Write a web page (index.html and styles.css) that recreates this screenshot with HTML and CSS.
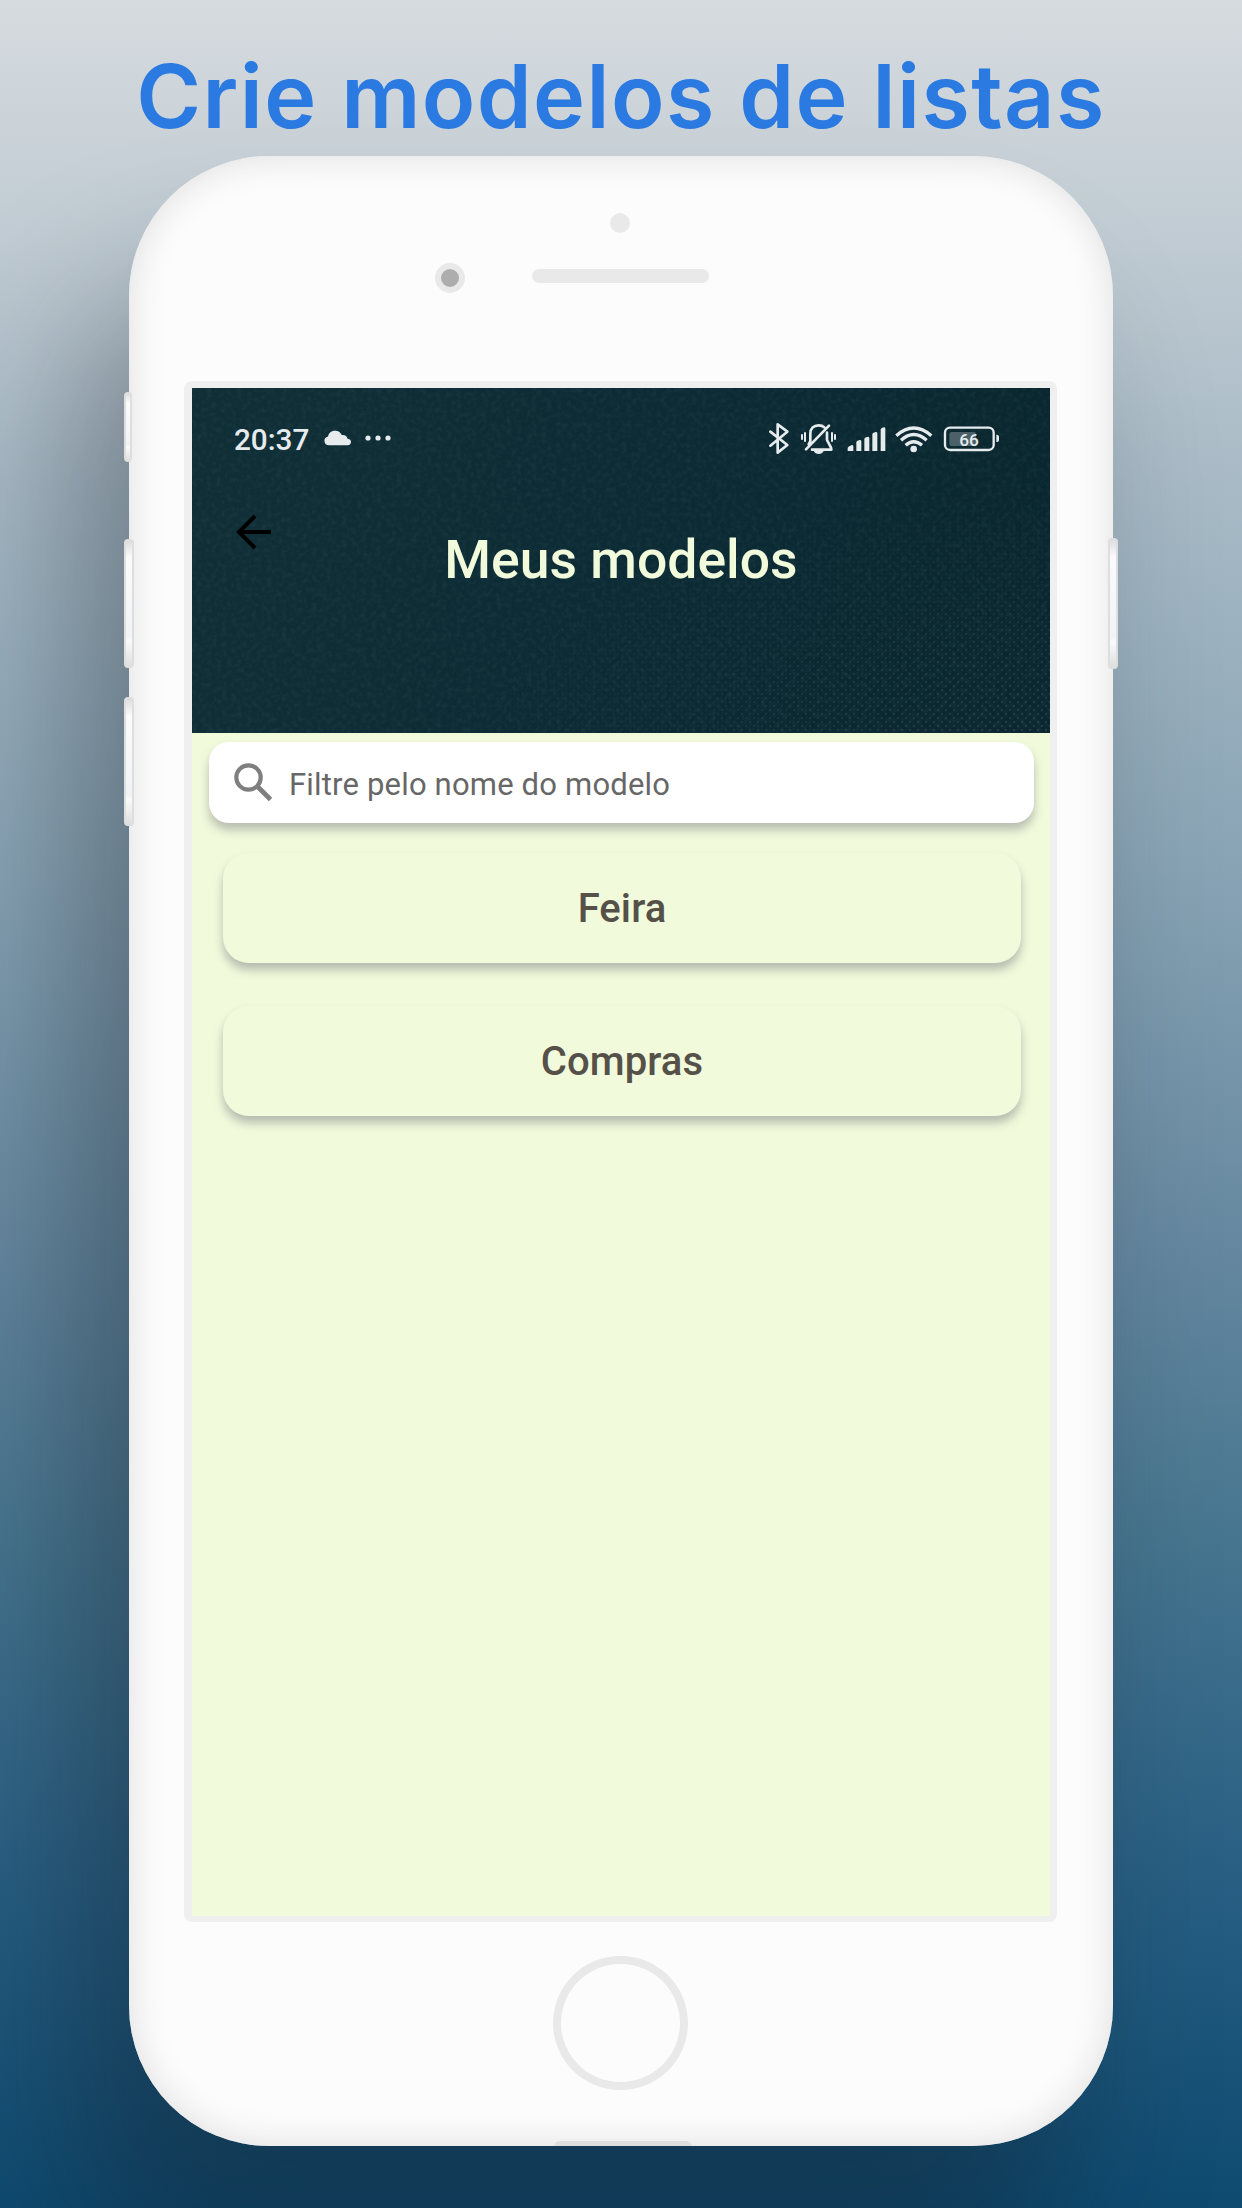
FILE: index.html
```html
<!DOCTYPE html>
<html lang="pt-BR">
<head>
<meta charset="utf-8">
<title>Crie modelos de listas</title>
<link rel="stylesheet" href="styles.css">
</head>
<body>
<main class="promo">
  <h1 class="promo-title">Crie modelos de listas</h1>
  <div class="phone">
    <span class="side-button mute"></span>
    <span class="side-button volume-up"></span>
    <span class="side-button volume-down"></span>
    <span class="side-button power"></span>
    <div class="phone-body">
      <div class="phone-top">
        <span class="sensor"></span>
        <span class="camera"></span>
        <span class="speaker"></span>
      </div>
      <div class="screen">
        <header class="app-header">
          <svg class="weave" width="858" height="345" aria-hidden="true">
            <defs>
              <filter id="grain" x="0" y="0" width="100%" height="100%">
                <feTurbulence type="fractalNoise" baseFrequency="0.2" numOctaves="2" seed="4"/>
                <feColorMatrix values="0 0 0 0 .3  0 0 0 0 .5  0 0 0 0 .52  .9 0 0 0 -.36"/>
              </filter>
              <pattern id="dots" width="8" height="8" patternUnits="userSpaceOnUse">
                <circle cx="2" cy="2" r="1.2" fill="#46636a"/><circle cx="6" cy="6" r="1.2" fill="#46636a"/>
              </pattern>
              <radialGradient id="fade" cx="1" cy="1" r=".75">
                <stop offset="0" stop-color="#fff" stop-opacity=".4"/><stop offset="1" stop-color="#fff" stop-opacity="0"/>
              </radialGradient>
              <mask id="corner"><rect width="858" height="345" fill="url(#fade)"/></mask>
            </defs>
            <rect width="858" height="345" filter="url(#grain)" opacity=".16"/>
            <rect width="858" height="345" fill="url(#dots)" mask="url(#corner)"/>
          </svg>
          <div class="status-bar">
            <span class="clock">20:37</span>
            <svg class="cloud" width="28" height="16" viewBox="0 0 28 16"><path d="M5 15.3a4.5 4.5 0 0 1-1-8.9C5 2.5 8 .8 11.200.8c3 0 5.300 1.500 6.600 4.200 3.200-.5 5.200 1.200 5.800 3.800 2.300.3 3.400 1.500 3.400 3.200 0 2-1.500 3.300-3.500 3.300z"/></svg>
            <svg class="more" width="26" height="6" viewBox="0 0 26 6"><circle cx="3" cy="3" r="2.600"/><circle cx="13" cy="3" r="2.600"/><circle cx="23" cy="3" r="2.600"/></svg>
            <svg class="indicators" width="234" height="37" viewBox="80 60 702 111">
              <g fill="none" stroke="#e6ebed" stroke-width="8" stroke-linecap="round" stroke-linejoin="round">
                <path d="M90 95l51 40-29 23V73l29 22-51 42"/>
                <path d="M205 133l5-10v-22c0-16 10-25 25-25 7 0 13 2 17 6M260 98v22l12 23 1 6h-58M197 148l69-71"/>
                <path d="M185 105v12M194 99v24M275 99v24M284 105v12" stroke-width="6"/>
                <rect x="614" y="83" width="146" height="67" rx="15" stroke-width="7"/>
              </g>
              <g fill="none" stroke="#e6ebed" stroke-width="10">
                <path d="M468 107q52-46 105 0M482 121q38-35 77 0M496 136q24-22 49 0"/>
              </g>
              <g fill="#e6ebed">
                <path d="M220 153h30c-3 6-8 9-15 9s-12-3-15-9z"/>
                <path d="M322 153v-9q1-4 13-9q4 0 4 4v14zM348 153v-27q1-4 11-6q4 0 4 4v29zM372 153v-37q1-4 11-6q4 0 4 4v39zM396 153v-51q1-4 11-6q4 0 4 4v53zM421 153V88q1-4 10-6q4 0 4 4v67z"/>
                <circle cx="520" cy="147" r="10"/>
                <path d="M768 104h2q6 1 6 6v10q0 6-6 6h-2z"/>
              </g>
              <rect x="627" y="96" width="80" height="42" rx="7" fill="#4b6067"/>
              <text x="686" y="137" text-anchor="middle" class="battery-level">66</text>
            </svg>
          </div>
          <svg class="back" width="36" height="36" viewBox="0 0 36 36"><path d="M35 18H4M19 2L3 18l16 16" fill="none" stroke="#000" stroke-width="4"/></svg>
          <h2 class="app-title">Meus modelos</h2>
        </header>
        <section class="content">
          <div class="search">
            <svg width="40" height="40" viewBox="0 0 40 40"><g fill="none" stroke="#7f7f7f"><circle cx="15.500" cy="14.500" r="12.200" stroke-width="4.200"/><path d="M24 23L37.500 36.500" stroke-width="4.800"/></g></svg>
            <span>Filtre pelo nome do modelo</span>
          </div>
          <div class="model">Feira</div>
          <div class="model">Compras</div>
        </section>
      </div>
      <span class="home"></span>
      <span class="dock"></span>
    </div>
  </div>
</main>
</body>
</html>
```
FILE: styles.css
```css
* { box-sizing: border-box; }
body { margin: 0; font-family: Roboto, "Liberation Sans", sans-serif; }
.promo {
  width: 1242px; height: 2208px; overflow: hidden;
  display: flex; flex-direction: column; align-items: center;
  background: linear-gradient(#d6dbdf 0%, #c4ced5 9%, #a8bac6 22%, #89a4b5 39%, #64879f 57%, #46758f 70%, #2a6084 84%, #0e4a70 100%);
}
.promo-title {
  margin: 0; height: 156px; padding-top: 42px;
  font: 600 88px/108px Inter, sans-serif; letter-spacing: 1.400px; color: #2b7ae2; white-space: nowrap;
}
.phone {
  position: relative; width: 984px; height: 1990px; border-radius: 140px;
  box-shadow: -55px 135px 150px rgba(20, 26, 32, .36);
}
.phone-body {
  position: relative; height: 100%; border-radius: 140px; overflow: hidden;
  background: #fcfcfc; box-shadow: inset 0 0 36px #dedede;
  display: flex; flex-direction: column; align-items: center;
}
.phone-top {
  width: 100%; height: 225px; flex: none; padding-top: 56px;
  display: grid; grid-template-columns: 306px 97px 177px; grid-template-rows: 42px 30px; align-content: start; align-items: center;
}
.sensor { grid-column: 3; width: 20px; height: 20px; margin: -21px 0 0 78px; border-radius: 50%; background: #e9e9e9; }
.camera { grid-column: 2; grid-row: 2; width: 30px; height: 30px; margin-top: 18px; border: 6px solid #e9e9e9; border-radius: 50%; background: #adadad; }
.speaker { grid-column: 3; grid-row: 2; height: 14px; margin-top: 14px; border-radius: 7px; background: #e9e9e9; }
.side-button {
  position: absolute; z-index: 1; left: -5px; width: 10px; height: 129px; border-radius: 4px;
  border: solid #dedede; border-width: 1px 2px;
  background: linear-gradient(#dcdcdc, #fbfbfb 14%, #f2f3f5 76%, #fafafa 80%, #dedede);
}
.mute { top: 236px; width: 8px; height: 70px; }
.volume-up { top: 383px; }
.volume-down { top: 541px; }
.power { top: 382px; left: auto; right: -5px; height: 131px; }
.screen {
  width: 873px; height: 1541px; flex: none; margin-right: 1px;
  border: solid #efefef; border-width: 7px 7px 6px 8px; border-radius: 8px;
  background: #f1fadb; display: flex; flex-direction: column;
}
.app-header {
  position: relative; height: 345px; flex: none; overflow: hidden;
  background: linear-gradient(110deg, #102f37, #0c2b34 50%, #0a262f);
}
.weave { position: absolute; inset: 0; }
.status-bar { position: relative; height: 100px; padding: 32px 49px 0 42px; display: flex; align-items: flex-start; fill: #e6ebed; }
.clock { width: 90px; font-size: 29.700px; line-height: 40px; font-weight: 500; color: #e6ebed; }
.cloud { margin-top: 10px; }
.more { margin: 15px 0 0 13px; }
.indicators { margin-left: auto; }
.battery-level { font-size: 52px; font-weight: 500; fill: #e6ebed; }
.back { position: relative; display: block; margin: 26px 0 0 44px; }
.app-title { position: relative; margin: -22px 0 0; text-align: center; font-size: 53.500px; line-height: 64px; font-weight: 500; color: #f1fadb; }
.content { padding: 9px 16px 0 17px; display: flex; flex-direction: column; }
.search {
  height: 81px; padding: 0 24px; border-radius: 20px; background: #fff;
  display: flex; align-items: center; gap: 16px; margin-bottom: 30px;
  font-size: 31px; letter-spacing: .18px; color: #676767; box-shadow: 0 7px 10px rgba(80, 80, 100, .35);
}
.search span { padding-top: 4px; }
.model {
  height: 110px; margin: 0 13px 43px 14px; border-radius: 26px; background: #f1fadb;
  display: flex; align-items: center; justify-content: center;
  font-size: 40px; font-weight: 500; letter-spacing: .1px; color: #555149; box-shadow: 0 7px 10px rgba(80, 80, 100, .36);
}
.home { width: 135px; height: 134px; margin: 34px 1px 51px 0; border: 8px solid #e9e9e9; border-radius: 50%; flex: none; }
.dock { width: 138px; height: 6px; margin-left: 3px; border-radius: 12px 12px 0 0; background: #dedede; flex: none; }
```
